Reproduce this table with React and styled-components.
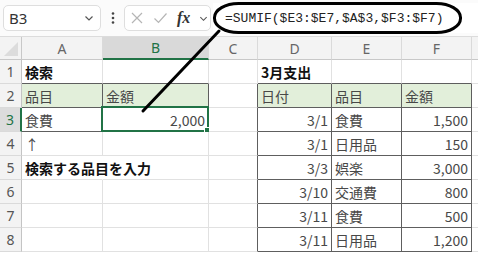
import React from 'react';
import styled, { createGlobalStyle } from 'styled-components';

const GlobalStyle = createGlobalStyle`
  html, body {
    margin: 0;
    padding: 0;
    background: #ffffff;
  }
  body {
    font-family: "Noto Sans CJK JP", "Noto Sans", sans-serif;
  }
`;

const GREEN = '#217346';
const GRID = '#e1e1e1';
const DARK = '#5e5e5e';
const FILL = '#e2efda';

const COLS = [22, 81, 106, 49, 74, 70, 70];
const LETTERS = ['A', 'B', 'C', 'D', 'E', 'F', 'G'];

const Page = styled.div`
  position: relative;
  width: 478px;
  height: 258px;
  overflow: hidden;
  background: #fff;
`;

const Toolbar = styled.div`
  display: flex;
  align-items: center;
  height: 37px;
  padding-left: 3px;
  background: #fbfbfb;
  border-bottom: 1px solid #dcdcdc;
  box-sizing: border-box;
`;

const NameBox = styled.div`
  display: flex;
  align-items: center;
  justify-content: space-between;
  width: 98px;
  height: 26px;
  box-sizing: border-box;
  padding: 0 6px 0 5px;
  background: #fff;
  border: 1px solid #dedede;
  border-radius: 5px;
  font-family: "Noto Sans", sans-serif;
  font-size: 15px;
  color: #333;
`;

const Dots = styled.div`
  display: flex;
  justify-content: center;
  width: 23px;
`;

const FuncBox = styled.div`
  display: flex;
  align-items: center;
  width: 87px;
  height: 26px;
  box-sizing: border-box;
  padding-left: 5px;
  gap: 9px;
  background: #fff;
  border: 1px solid #dedede;
  border-radius: 5px;
`;

const Fx = styled.span`
  font-family: "Liberation Serif", serif;
  font-style: italic;
  font-weight: bold;
  font-size: 16px;
  color: #333;
`;

const FormulaField = styled.div`
  flex: 1;
  display: flex;
  align-items: center;
  height: 30px;
  margin-left: 2px;
  padding-left: 12px;
  background: #fff;
  font-family: "Liberation Mono", monospace;
  font-size: 13px;
  color: #222;
  white-space: nowrap;
`;

const Sheet = styled.div`
  display: grid;
  grid-template-columns: ${COLS.map((w) => `${w}px`).join(' ')} 1fr;
  grid-template-rows: 23px repeat(8, 24px);
`;

const Corner = styled.div`
  position: relative;
  background: #f3f3f3;
  border-right: 1px solid #c8c8c8;
  border-bottom: 1px solid #c8c8c8;

  &::after {
    content: '';
    position: absolute;
    right: 3px;
    bottom: 3px;
    border-left: 14px solid transparent;
    border-bottom: 14px solid #dcdcdc;
  }
`;

const ColHead = styled.div`
  display: flex;
  align-items: center;
  justify-content: center;
  background: ${(p) => (p.$active ? '#d9d9d9' : '#f3f3f3')};
  border-right: 1px solid #dadada;
  border-bottom: ${(p) => (p.$active ? `2px solid ${GREEN}` : '1px solid #c8c8c8')};
  font-family: "Noto Sans", sans-serif;
  font-size: 14px;
  color: ${(p) => (p.$active ? GREEN : '#666')};
`;

const RowHead = styled.div`
  display: flex;
  align-items: center;
  justify-content: center;
  background: ${(p) => (p.$active ? '#dcdcdc' : '#f3f3f3')};
  border-right: ${(p) => (p.$active ? `2px solid ${GREEN}` : '1px solid #c4c4c4')};
  border-bottom: 1px solid #dadada;
  font-family: "Noto Sans", sans-serif;
  font-size: 14px;
  color: ${(p) => (p.$active ? GREEN : '#555')};
`;

const Cell = styled.div`
  position: relative;
  display: flex;
  align-items: center;
  justify-content: ${(p) => (p.$num ? 'flex-end' : 'flex-start')};
  padding: 1px 3px 0 3px;
  min-width: 0;
  white-space: nowrap;
  overflow: visible;
  background: ${(p) => (p.$fill ? FILL : '#fff')};
  border-right: 1px solid ${(p) => p.$right};
  border-bottom: 1px solid ${(p) => p.$bottom};
  font-size: 14px;
  font-weight: ${(p) => (p.$bold ? 700 : 400)};
  color: ${(p) => (p.$bold ? '#111' : '#484848')};
  z-index: ${(p) => (p.$spill ? 2 : 1)};
`;

const Selection = styled.div`
  position: absolute;
  top: -2px;
  left: -2px;
  right: -1px;
  bottom: -1px;
  border: 2px solid ${GREEN};
  pointer-events: none;

  &::after {
    content: '';
    position: absolute;
    right: -4px;
    bottom: -4px;
    width: 5px;
    height: 5px;
    background: ${GREEN};
    border: 1px solid #fff;
  }
`;

const Overlay = styled.svg`
  position: absolute;
  inset: 0;
  pointer-events: none;
  z-index: 10;
`;

// rows 1..8, columns A..G
const data = {
  1: { 0: { t: '検索', bold: true }, 3: { t: '3月支出', bold: true } },
  2: {
    0: { t: '品目', fill: true },
    1: { t: '金額', fill: true },
    3: { t: '日付', fill: true },
    4: { t: '品目', fill: true },
    5: { t: '金額', fill: true },
  },
  3: { 0: { t: '食費' }, 1: { t: '2,000', num: true } },
  4: { 0: { t: '↑' } },
  5: { 0: { t: '検索する品目を入力', bold: true, spill: true } },
};

const expenses = [
  ['3/1', '食費', '1,500'],
  ['3/1', '日用品', '150'],
  ['3/3', '娯楽', '3,000'],
  ['3/10', '交通費', '800'],
  ['3/11', '食費', '500'],
  ['3/11', '日用品', '1,200'],
];

expenses.forEach(([d, item, amt], i) => {
  const r = i + 3;
  data[r] = data[r] || {};
  data[r][3] = { t: d, num: true };
  data[r][4] = { t: item };
  data[r][5] = { t: amt, num: true };
});

const boxes = [
  { r0: 2, r1: 3, c0: 0, c1: 1 },
  { r0: 2, r1: 8, c0: 3, c1: 5 },
];

const inBox = (r, c) => boxes.some((b) => r >= b.r0 && r <= b.r1 && c >= b.c0 && c <= b.c1);

const ChevronDown = ({ size = 10 }) => (
  <svg width={size} height={size} viewBox="0 0 10 10">
    <path d="M1.5 3.5 L5 7 L8.5 3.5" fill="none" stroke="#555" strokeWidth="1.2" />
  </svg>
);

export default function App() {
  const rows = [];
  for (let r = 1; r <= 8; r++) {
    rows.push(
      <RowHead key={`h${r}`} $active={r === 3}>
        {r}
      </RowHead>
    );
    for (let c = 0; c < LETTERS.length; c++) {
      const cell = (data[r] && data[r][c]) || {};
      const right = cell.spill ? 'transparent' : inBox(r, c) || inBox(r, c + 1) ? DARK : GRID;
      const bottom = inBox(r, c) || inBox(r + 1, c) ? DARK : GRID;
      rows.push(
        <Cell
          key={`${r}-${c}`}
          $right={right}
          $bottom={bottom}
          $fill={cell.fill}
          $num={cell.num}
          $bold={cell.bold}
          $spill={cell.spill}
        >
          {cell.t}
          {r === 3 && c === 1 && <Selection />}
        </Cell>
      );
    }
  }

  return (
    <Page>
      <GlobalStyle />
      <Toolbar>
        <NameBox>
          <span>B3</span>
          <ChevronDown />
        </NameBox>
        <Dots>
          <svg width="4" height="14" viewBox="0 0 4 14">
            <circle cx="2" cy="2.5" r="1.3" fill="#444" />
            <circle cx="2" cy="7" r="1.3" fill="#444" />
            <circle cx="2" cy="11.5" r="1.3" fill="#444" />
          </svg>
        </Dots>
        <FuncBox>
          <svg width="14" height="14" viewBox="0 0 14 14">
            <path d="M2 2 L12 12 M12 2 L2 12" stroke="#b5b5b5" strokeWidth="1.2" />
          </svg>
          <svg width="15" height="14" viewBox="0 0 15 14">
            <path d="M1.5 7.5 L5.5 11.5 L13.5 2.5" fill="none" stroke="#b5b5b5" strokeWidth="1.2" />
          </svg>
          <Fx>fx</Fx>
          <ChevronDown size={9} />
        </FuncBox>
        <FormulaField>=SUMIF($E3:$E7,$A$3,$F3:$F7)</FormulaField>
      </Toolbar>

      <Sheet>
        <Corner />
        {LETTERS.map((l, i) => (
          <ColHead key={l} $active={i === 1}>
            {i < 6 ? l : ''}
          </ColHead>
        ))}
        {rows}
      </Sheet>

      {/* callout: formula ring with a pointer down to B3 */}
      <Overlay width="478" height="258" viewBox="0 0 478 258">
        <rect x="214.5" y="3.5" width="246" height="29" rx="24" ry="14" fill="none" stroke="#000" strokeWidth="3" />
        <path d="M219 31 L143 111" stroke="#000" strokeWidth="3" strokeLinecap="round" />
      </Overlay>
    </Page>
  );
}
